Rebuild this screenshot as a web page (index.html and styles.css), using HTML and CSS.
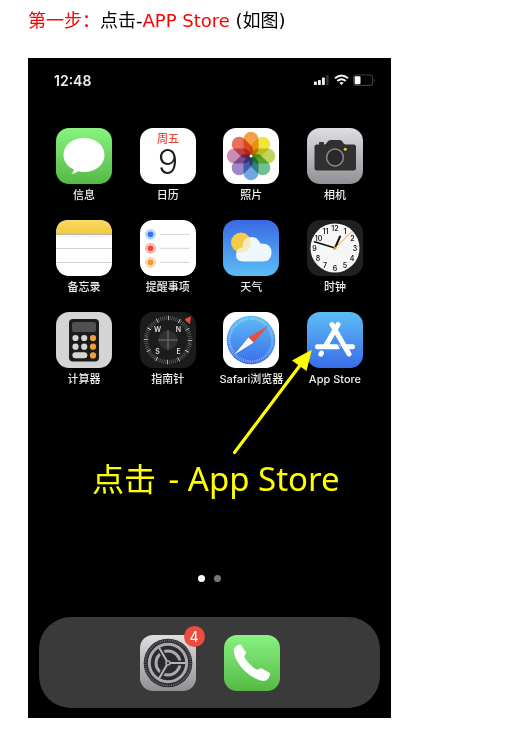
FILE: index.html
```html
<!DOCTYPE html>
<html lang="zh-CN">
<head>
<meta charset="utf-8">
<meta name="viewport" content="width=device-width, initial-scale=1">
<title>第一步</title>
<link rel="stylesheet" href="styles.css">
</head>
<body>
<main class="guide">
  <p class="step"><span class="accent">第一步：</span>点击-<span class="accent">APP Store</span> (如图)</p>

  <section class="phone">
    <header class="status">
      <time class="clock">12:48</time>
      <svg class="indicators" width="64" height="14" viewBox="0 0 64 14" aria-hidden="true">
        <g fill="#f4f4f4">
          <rect x="1" y="8.500" width="2.800" height="3.500" rx=".5"/>
          <rect x="5" y="7" width="2.800" height="5" rx=".5"/>
          <rect x="9" y="4.500" width="2.800" height="7.500" rx=".5"/>
        </g>
        <rect x="13.200" y="2" width="2.400" height="10" rx=".5" fill="#333"/>
        <g fill="none" stroke="#f4f4f4" stroke-width="1.900">
          <path d="M22 5.300Q28.500-.3 35 5.300"/>
          <path d="M24.300 8Q28.500 4.300 32.700 8"/>
        </g>
        <path d="M26.300 9.800Q28.500 8 30.700 9.800L28.500 12Z" fill="#f4f4f4"/>
        <rect x="40.600" y="2" width="19" height="10.400" rx="2.600" fill="none" stroke="#3c3c3c" stroke-width="1.200"/>
        <path d="M61.300 5.500Q63 7.300 61.300 9.100Z" fill="#555"/>
        <rect x="41.700" y="3.200" width="5.800" height="8" rx="1.200" fill="#fff"/>
      </svg>
    </header>

    <ul class="apps">
      <li><button type="button" class="app">
        <svg class="icon" viewBox="0 0 56 56" aria-hidden="true">
          <defs><linearGradient id="green" x2="0" y2="1"><stop stop-color="#88f37f"/><stop offset="1" stop-color="#56b946"/></linearGradient></defs>
          <rect width="56" height="56" rx="13" fill="url(#green)"/>
          <path d="M28 10C39.500 10 48.500 17.300 48.500 27S39.500 44 28 44Q24.800 44 22 43.300Q19.500 45.500 15.500 46Q17.800 44 17.800 41.500C11.500 38.500 7.500 33.500 7.500 27C7.500 17.300 16.500 10 28 10Z" fill="#fff"/>
        </svg><span class="label">信息</span></button></li>
      <li><button type="button" class="app">
        <svg class="icon" viewBox="0 0 56 56" aria-hidden="true">
          <rect width="56" height="56" rx="13" fill="#fff"/>
          <text class="weekday" x="28" y="15">周五</text>
          <text class="day" x="28" y="46">9</text>
        </svg><span class="label">日历</span></button></li>
      <li><button type="button" class="app">
        <svg class="icon" viewBox="0 0 56 56" aria-hidden="true">
          <rect width="56" height="56" rx="13" fill="#fff"/>
          <g class="petals">
            <rect x="20.500" y="3.800" width="15" height="24" rx="7.500" fill="#f3a044"/>
            <rect x="20.500" y="3.800" width="15" height="24" rx="7.500" fill="#f2e43d" transform="rotate(45 28 28)"/>
            <rect x="20.500" y="3.800" width="15" height="24" rx="7.500" fill="#bed660" transform="rotate(90 28 28)"/>
            <rect x="20.500" y="3.800" width="15" height="24" rx="7.500" fill="#6fc28e" transform="rotate(135 28 28)"/>
            <rect x="20.500" y="3.800" width="15" height="24" rx="7.500" fill="#70a7e2" transform="rotate(180 28 28)"/>
            <rect x="20.500" y="3.800" width="15" height="24" rx="7.500" fill="#9c89c8" transform="rotate(225 28 28)"/>
            <rect x="20.500" y="3.800" width="15" height="24" rx="7.500" fill="#cd8bb8" transform="rotate(270 28 28)"/>
            <rect x="20.500" y="3.800" width="15" height="24" rx="7.500" fill="#ea6f5e" transform="rotate(315 28 28)"/>
          </g>
          <circle cx="28" cy="28" r="1.500" fill="#fff"/>
        </svg><span class="label">照片</span></button></li>
      <li><button type="button" class="app">
        <svg class="icon" viewBox="0 0 56 56" aria-hidden="true">
          <defs><linearGradient id="silver" x2="0" y2="1"><stop stop-color="#dfdee3"/><stop offset="1" stop-color="#919096"/></linearGradient></defs>
          <rect width="56" height="56" rx="13" fill="url(#silver)"/>
          <rect x="12" y="14" width="5" height="3" rx="1" fill="#303030"/>
          <path d="M10 16.500H17.500Q19 16.500 20 14.500Q21 12 23.500 12H33Q35 12 36 14.500Q37 16.500 38.500 16.500H46.500Q49 16.500 49 19V40Q49 42.500 46.500 42.500H10Q7.500 42.500 7.500 40V19Q7.500 16.500 10 16.500Z" fill="#303030"/>
          <circle cx="28" cy="29.500" r="8.400" fill="#292929" stroke="#88888a" stroke-width="1.500"/>
          <circle cx="38.300" cy="21.200" r="1.500" fill="#f5c432"/>
        </svg><span class="label">相机</span></button></li>

      <li><button type="button" class="app">
        <svg class="icon" viewBox="0 0 56 56" aria-hidden="true">
          <defs><linearGradient id="gold" x2="0" y2="1"><stop stop-color="#f9dc62"/><stop offset="1" stop-color="#f3c841"/></linearGradient></defs>
          <rect width="56" height="56" rx="13" fill="#fff"/>
          <path d="M0 14V13Q0 0 13 0H43Q56 0 56 13V14Z" fill="url(#gold)"/>
          <path d="M0 14.500H56" stroke="#bbb4a2"/>
          <path d="M1 16.500H55" stroke="#ddd" stroke-width="1.200" stroke-dasharray="1 1.200"/>
          <path d="M0 28.500H56M0 42.500H56" stroke="#d3d3d3"/>
        </svg><span class="label">备忘录</span></button></li>
      <li><button type="button" class="app">
        <svg class="icon" viewBox="0 0 56 56" aria-hidden="true">
          <rect width="56" height="56" rx="13" fill="#fff"/>
          <g fill="#3478f6"><circle cx="10.500" cy="14.300" r="5.300" opacity=".4"/><circle cx="10.500" cy="14.300" r="3.800" fill="#fff"/><circle cx="10.500" cy="14.300" r="3.100"/></g>
          <g fill="#ea4e3d"><circle cx="10.500" cy="28.300" r="5.300" opacity=".5"/><circle cx="10.500" cy="28.300" r="3.800" fill="#fff"/><circle cx="10.500" cy="28.300" r="3.100"/></g>
          <g fill="#f09a38"><circle cx="10.500" cy="42.300" r="5.300" opacity=".5"/><circle cx="10.500" cy="42.300" r="3.800" fill="#fff"/><circle cx="10.500" cy="42.300" r="3.100"/></g>
          <path d="M20.500 14.300H49M20.500 28.300H49M20.500 42.300H49" stroke="#dcdcdc" stroke-width="1.300" stroke-linecap="round"/>
        </svg><span class="label">提醒事项</span></button></li>
      <li><button type="button" class="app">
        <svg class="icon" viewBox="0 0 56 56" aria-hidden="true">
          <defs>
            <linearGradient id="sky" x2="0" y2="1"><stop stop-color="#3a69e5"/><stop offset="1" stop-color="#5cbdf5"/></linearGradient>
            <path id="cloud" d="M20 41.500Q13 41.500 13 35Q13 28.500 19.500 27.500Q19.500 17 28.500 17Q34 17 37.500 23.500Q48.500 23 48.500 32.500Q48.500 41.500 39.500 41.500Z"/>
            <clipPath id="cloud-clip"><use href="#cloud"/></clipPath>
          </defs>
          <rect width="56" height="56" rx="13" fill="url(#sky)"/>
          <circle cx="18" cy="22.500" r="10" fill="#f7cb45"/>
          <use href="#cloud" fill="#eef6fe"/>
          <circle cx="18" cy="22.500" r="10" fill="#fbe29a" opacity=".6" clip-path="url(#cloud-clip)"/>
        </svg><span class="label">天气</span></button></li>
      <li><button type="button" class="app">
        <svg class="icon" viewBox="0 0 56 56" aria-hidden="true">
          <rect width="56" height="56" rx="13" fill="#202020"/>
          <circle cx="28" cy="28" r="24.500" fill="#f6f6f6"/>
          <g class="hours">
            <text x="28" y="11">12</text><text x="38" y="13.500">1</text><text x="45.500" y="21">2</text><text x="48" y="30.500">3</text>
            <text x="45" y="40.500">4</text><text x="38" y="48">5</text><text x="28" y="50.500">6</text><text x="18" y="48">7</text>
            <text x="11" y="40.500">8</text><text x="7.500" y="30.500">9</text><text x="11.500" y="21">10</text><text x="18.500" y="13.500">11</text>
          </g>
          <path d="M28 28L33 16.500" stroke="#111" stroke-width="2" stroke-linecap="round"/>
          <path d="M28 28L7.500 21.800" stroke="#111" stroke-width="1.700" stroke-linecap="round"/>
          <path d="M26 30L44.500 12" stroke="#f0a04a" stroke-width="1"/>
          <circle cx="28" cy="28" r="1.500" fill="#d88d43"/>
        </svg><span class="label">时钟</span></button></li>

      <li><button type="button" class="app">
        <svg class="icon" viewBox="0 0 56 56" aria-hidden="true">
          <rect width="56" height="56" rx="13" fill="#d4d4d2"/>
          <rect x="13" y="7" width="30" height="42.500" rx="4" fill="#1c1c1c"/>
          <rect x="16" y="10" width="24" height="10" rx="2" fill="#505050"/>
          <g fill="#d5d5d3"><circle cx="19.500" cy="26" r="3.100"/><circle cx="28.200" cy="26" r="3.100"/><circle cx="19.500" cy="34.700" r="3.100"/><circle cx="28.200" cy="34.700" r="3.100"/><rect x="16.400" y="40.300" width="14.900" height="6" rx="3"/></g>
          <g fill="#f1a03c"><circle cx="37" cy="26" r="3.100"/><circle cx="37" cy="34.700" r="3.100"/><circle cx="37" cy="43.400" r="3.100"/></g>
        </svg><span class="label">计算器</span></button></li>
      <li><button type="button" class="app">
        <svg class="icon" viewBox="0 0 56 56" aria-hidden="true">
          <rect width="56" height="56" rx="13" fill="#1c1c1c"/>
          <circle cx="28" cy="28" r="22" fill="none" stroke="#777" stroke-width="4" pathLength="72" stroke-dasharray=".3 .7"/>
          <circle cx="28" cy="28" r="22" fill="none" stroke="#ddd" stroke-width="4.500" pathLength="72" stroke-dasharray=".4 5.600"/>
          <circle cx="28" cy="28" r="9.500" fill="#303030"/>
          <path d="M28 18V38M18 28H38" stroke="#777" stroke-width="1"/>
          <path d="M50.500 5L49.500 11.500L45 7.500Z" fill="#ec4c3a" stroke="#ec4c3a" stroke-linejoin="round"/>
          <g class="points"><text x="17.500" y="20.300">W</text><text x="38.500" y="20.300">N</text><text x="17.500" y="41.500">S</text><text x="38.500" y="41.500">E</text></g>
        </svg><span class="label">指南针</span></button></li>
      <li><button type="button" class="app">
        <svg class="icon" viewBox="0 0 56 56" aria-hidden="true">
          <defs><linearGradient id="blue" x2="0" y2="1"><stop stop-color="#5dbdf5"/><stop offset="1" stop-color="#3a6de9"/></linearGradient></defs>
          <rect width="56" height="56" rx="13" fill="#fff"/>
          <circle cx="28" cy="28" r="24.300" fill="url(#blue)"/>
          <circle cx="28" cy="28" r="21.500" fill="none" stroke="#fff" stroke-opacity=".65" stroke-width="2.600" pathLength="72" stroke-dasharray=".3 .7"/>
          <path d="M45.500 13.500L30.500 30.500L25.500 25.500Z" fill="#eb4d3d"/>
          <path d="M11.500 42.500L25.500 25.500L30.500 30.500Z" fill="#fff"/>
        </svg><span class="label">Safari浏览器</span></button></li>
      <li><button type="button" class="app">
        <svg class="icon" viewBox="0 0 56 56" aria-hidden="true">
          <rect width="56" height="56" rx="13" fill="url(#blue)"/>
          <g fill="none" stroke="#fff" stroke-width="5" stroke-linecap="round">
            <path d="M31 12.500L18.500 34M14.500 41L13.800 42.200"/>
            <path d="M25 12.500L42 42"/>
            <path d="M10.500 34.700H31M39 34.700H45.500"/>
          </g>
          <path d="M28 27L36 41" stroke="#4584ee" stroke-width="1.200"/>
        </svg><span class="label">App Store</span></button></li>
    </ul>

    <p class="hint">点击<span class="latin"> - App Store</span></p>

    <div class="pages"><span class="dot current"></span><span class="dot"></span></div>

    <nav class="dock" aria-label="Dock">
      <button type="button" class="app" aria-label="设置">
        <svg class="icon" viewBox="0 0 56 56" aria-hidden="true">
          <rect width="56" height="56" rx="13" fill="url(#silver)"/>
          <circle cx="28" cy="28" r="24.300" fill="#2b2b2d"/>
          <circle cx="28" cy="28" r="22.500" fill="none" stroke="#77777b" stroke-width="2" pathLength="72" stroke-dasharray=".4 .6"/>
          <circle cx="28" cy="28" r="12" fill="none" stroke="#aaa9ae" stroke-width="3"/>
          <path d="M28 28H46M28 28L19 12.400M28 28L19 43.600" stroke="#2b2b2d" stroke-width="5"/>
          <circle cx="28" cy="28" r="18.700" fill="none" stroke="#aaa9ae" stroke-width="3"/>
          <path d="M28 28H46M28 28L19 12.400M28 28L19 43.600" stroke="#b5b4b9" stroke-width="2"/>
          <circle cx="28" cy="28" r="2.800" fill="#aaa9ae"/><circle cx="28" cy="28" r="1.200" fill="#333"/>
        </svg>
        <span class="badge">4</span>
      </button>
      <button type="button" class="app" aria-label="电话">
        <svg class="icon" viewBox="0 0 56 56" aria-hidden="true">
          <rect width="56" height="56" rx="13" fill="url(#green)"/>
          <path d="M12 11.200L14.500 9.800Q16.300 9 17.500 10.800L21.700 17Q22.500 18.300 21.200 19.500Q19.600 21 20.800 23Q25.500 30.300 32 34.200Q33.700 35.200 35 34Q36.300 32.700 38 33.600L45 37.600Q46.800 38.800 45.800 40.600L44.300 43.500Q42.500 46.700 37.500 45.700Q28.500 43.800 19.500 34.700Q12 26.500 10.200 18.500Q9 13.500 12 11.200Z" fill="#fff"/>
        </svg>
      </button>
    </nav>

    <svg class="arrow" viewBox="0 0 363 660" aria-hidden="true">
      <path d="M206.500 394.500L273 306" stroke="#ff0" stroke-width="3.200" stroke-linecap="round"/>
      <path d="M283.800 291.800L264 302.500L278.500 313Z" fill="#ff0"/>
    </svg>
  </section>
</main>
</body>
</html>
```
FILE: styles.css
```css
* {
  box-sizing: border-box;
}

body {
  margin: 0;
  background: #fff;
  color: #000;
  font-family: "DejaVu Sans", "Noto Sans CJK SC", sans-serif;
}

.guide {
  padding: 9px 28px 14px;
}

.step {
  margin: 0 0 25px;
  font-size: 18px;
  line-height: 24px;
}

.accent {
  color: #f00;
}

.phone {
  position: relative;
  max-width: 363px;
  padding-bottom: 10px;
  background: #000;
  color: #fff;
  font-family: Inter, "Noto Sans CJK SC", sans-serif;
}

.status {
  display: flex;
  align-items: center;
  justify-content: space-between;
  height: 44px;
  padding: 0 14px 0 26px;
}

.clock {
  font-size: 14px;
  font-weight: 600;
  color: #eee;
}

.apps {
  display: grid;
  grid-template-columns: repeat(4, 56px);
  justify-content: space-between;
  row-gap: 17px;
  margin: 26px 0 0;
  padding: 0 28px;
  list-style: none;
}

.app {
  position: relative;
  display: flex;
  flex-direction: column;
  align-items: center;
  width: 56px;
  padding: 0;
  border: 0;
  background: none;
  color: #eee;
  font: inherit;
}

.icon {
  display: block;
  width: 56px;
  height: 56px;
}

.label {
  margin-top: 3px;
  font-size: 11px;
  font-weight: 500;
  line-height: 16px;
  white-space: nowrap;
}

.weekday,
.day,
.hours,
.points {
  text-anchor: middle;
}

.weekday {
  fill: #e8493f;
  font-size: 11px;
  font-weight: 500;
}

.day {
  fill: #1c1c1e;
  font-size: 34px;
  font-weight: 300;
}

.petals rect {
  mix-blend-mode: multiply;
}

.petals {
  isolation: isolate;
}

.hours {
  fill: #222;
  font-size: 7px;
  font-weight: 600;
}

.points {
  fill: #ddd;
  font-size: 7px;
  font-weight: 600;
}

.hint {
  margin: 70px 0 0;
  padding-left: 64px;
  color: #ff0;
  font-family: "Noto Sans", "Noto Sans CJK SC", sans-serif;
  font-size: 32px;
  line-height: 44px;
  white-space: nowrap;
}

.latin {
  margin-left: 4px;
  font-size: 33px;
  line-height: 1;
}

.pages {
  display: flex;
  justify-content: center;
  gap: 9px;
  margin-top: 74px;
}

.dot {
  width: 7px;
  height: 7px;
  border-radius: 50%;
  background: #777;
}

.current {
  background: #fff;
}

.dock {
  display: flex;
  justify-content: center;
  gap: 28px;
  margin: 35px 11px 0;
  padding: 18px 0 17px;
  border-radius: 32px;
  background: #3a3a3a;
}

.badge {
  position: absolute;
  top: -9px;
  right: -9px;
  width: 21px;
  height: 21px;
  border-radius: 50%;
  background: #ec4d3d;
  color: #fff;
  font-size: 14px;
  line-height: 21px;
  text-align: center;
}

.arrow {
  position: absolute;
  inset: 0;
  width: 100%;
  height: 100%;
  pointer-events: none;
}
```
